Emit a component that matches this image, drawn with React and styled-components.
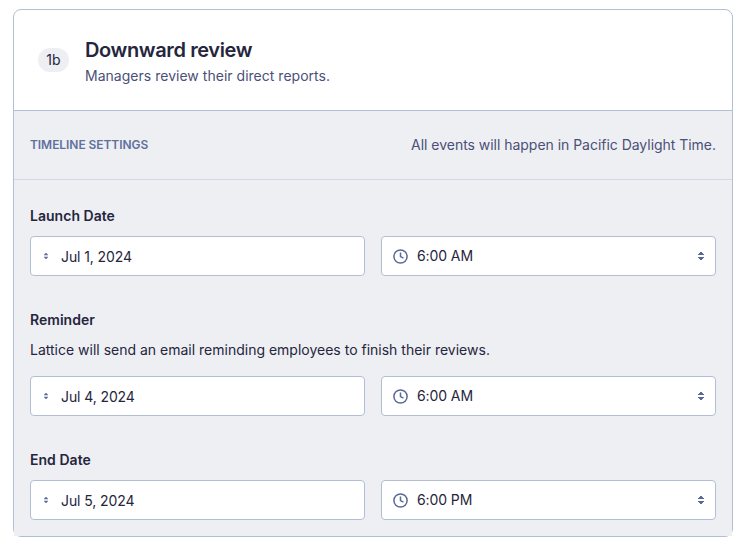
import React from "react";
import styled, { createGlobalStyle } from "styled-components";

const Global = createGlobalStyle`
  * { box-sizing: border-box; }
  body { margin: 0; background: #fff; font-family: Inter, "Liberation Sans", sans-serif; color: #25253d; }
  h1, h2, h3, p { margin: 0; }
`;
const Card = styled.main`
  width: 720px; height: 528px; margin: 9px 0 0 13px;
  border: 1px solid #b2bdd6; border-radius: 8px;
`;
const Header = styled.header`
  display: flex; align-items: center; gap: 16px; height: 101px; padding: 0 24px;
  border-bottom: 1px solid #b2bdd6;
`;
const Badge = styled.span`
  width: 31px; height: 24px; border-radius: 12px; background: #eeeff3;
  font-size: 14px; line-height: 24px; text-align: center;
`;
const Heading = styled.div`
  padding-top: 4px;
`;
const Title = styled.h1`
  font-size: 20px; line-height: 28px; font-weight: 600; letter-spacing: -0.38px;
`;
const Subtitle = styled.p`
  font-size: 14px; line-height: 24px; color: #4b5078; letter-spacing: 0.02px;
`;
const Panel = styled.div`
  background: #eeeff3;
  height: 425px;
`;
const Settings = styled.div`
  display: flex; align-items: center; justify-content: space-between; height: 69px;
  padding: 0 16px 2px; border-bottom: 1px solid #d5d8e4; color: #4b5078;
  font-size: 14px; letter-spacing: -0.03px;
`;
const Label = styled.h2`
  font-size: 12px; font-weight: 600; color: #6070a0; text-transform: uppercase; letter-spacing: -0.06px;
`;
const Body = styled.div`
  padding: 24px 16px 16px; display: flex; flex-direction: column; gap: 32px;
`;
const Field = styled.section``;
const FieldTitle = styled.h3`
  font-size: 14px; line-height: 24px; font-weight: 600; letter-spacing: 0.03px;
`;
const Hint = styled.p`
  font-size: 14px; line-height: 24px; margin: 6px 0 6px;
`;
const Inputs = styled.div`
  display: grid; grid-template-columns: 1fr 1fr; gap: 16px; padding-top: 8px;
`;
const Control = styled.button`
  display: flex; align-items: center; height: 40px; padding: 0 11px;
  border: 1px solid #b2bdd6; border-radius: 4px; background: #fff;
  font: 14px Inter, sans-serif; color: inherit; text-align: left;
`;
const Value = styled.span`
  flex: 1; margin-left: ${(p) => p.$gap}px; letter-spacing: -0.1px;
  padding-bottom: ${(p) => (p.$raised ? 2 : 0)}px;
`;
const SmallSort = styled.svg`
  margin-left: 2px;
`;

const Arrows = "M2 0h2v1h1v1h1v1H0V2h1V1h1zM0 5h6v1H5v1H4v1H2V7H1V6H0z";
const Clock = () => (
  <svg width="15" height="15" viewBox="0 0 15 15" fill="none" stroke="#5b6998" strokeWidth="1.5">
    <circle cx="7.5" cy="7.5" r="6.6" />
    <path d="M7.5 3.6v4l3 1.6" />
  </svg>
);
const Row = ({ title, hint, date, time }) => (
  <Field>
    <FieldTitle>{title}</FieldTitle>
    {hint && <Hint>{hint}</Hint>}
    <Inputs>
      <Control>
        <SmallSort width="4" height="6" viewBox="0 0 6 8" preserveAspectRatio="none" fill="#5b6998"><path d={Arrows} /></SmallSort>
        <Value $gap={13}>{date}</Value>
      </Control>
      <Control>
        <Clock />
        <Value $gap={9} $raised>{time}</Value>
        <svg width="6" height="8" viewBox="0 0 6 8" fill="#5b6998"><path d={Arrows} /></svg>
      </Control>
    </Inputs>
  </Field>
);

export default function App() {
  return (
    <>
      <Global />
      <Card>
        <Header>
          <Badge>1b</Badge>
          <Heading>
            <Title>Downward review</Title>
            <Subtitle>Managers review their direct reports.</Subtitle>
          </Heading>
        </Header>
        <Panel>
          <Settings>
            <Label>Timeline settings</Label>
            <span>All events will happen in Pacific Daylight Time.</span>
          </Settings>
          <Body>
            <Row title="Launch Date" date="Jul 1, 2024" time="6:00 AM" />
            <Row title="Reminder" hint="Lattice will send an email reminding employees to finish their reviews." date="Jul 4, 2024" time="6:00 AM" />
            <Row title="End Date" date="Jul 5, 2024" time="6:00 PM" />
          </Body>
        </Panel>
      </Card>
    </>
  );
}
